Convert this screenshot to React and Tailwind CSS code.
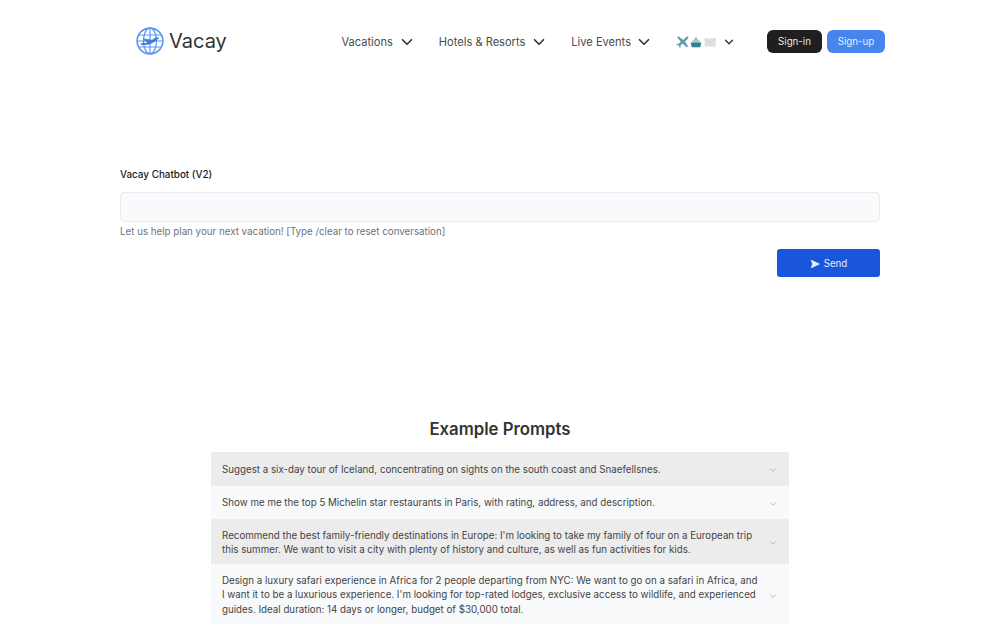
import React from 'react';
import { ChevronDown, SendHorizontal } from 'lucide-react';

const prompts = [
  { text: 'Suggest a six-day tour of Iceland, concentrating on sights on the south coast and Snaefellsnes.', bg: 'bg-[#ececec]' },
  { text: 'Show me me the top 5 Michelin star restaurants in Paris, with rating, address, and description.', bg: 'bg-[#f8f9fb]' },
  { text: "Recommend the best family-friendly destinations in Europe: I'm looking to take my family of four on a European trip this summer. We want to visit a city with plenty of history and culture, as well as fun activities for kids.", bg: 'bg-[#ececec]' },
  { text: "Design a luxury safari experience in Africa for 2 people departing from NYC: We want to go on a safari in Africa, and I want it to be a luxurious experience. I'm looking for top-rated lodges, exclusive access to wildlife, and experienced guides. Ideal duration: 14 days or longer, budget of $30,000 total.", bg: 'bg-[#f8f9fb]' },
];

const Logo = () => (
  <svg width="28" height="28" viewBox="0 0 28 28" fill="none" stroke="#5b96f0" strokeWidth="1.2">
    <circle cx="14" cy="14" r="12.9" strokeWidth="1.6" />
    <ellipse cx="14" cy="14" rx="6.5" ry="12.9" />
    <path d="M14 1v26M2.5 8h23M1.2 14h25.6M2.5 20h23" />
    <path d="M5 17.5c5 .6 10-.4 13-2.8l5-3.7-3.4-.3-3.6 2.5-7-1.2-1.6.8 4.8 2.2-3 1.6-2.6-.8z" fill="#3f78d8" stroke="#3f78d8" strokeWidth="0.6" />
  </svg>
);

const NavItem = ({ label, gap }) => (
  <div className={`flex items-center mt-[2px] ${gap}`}>
    <span className="pt-[1px]">{label}</span>
    <ChevronDown className="w-[18px] h-[18px] text-[#333]" strokeWidth={2.2} />
  </div>
);

const Emojis = () => (
  <svg width="40" height="14" viewBox="0 0 42 14">
    <path d="M1 2l2-.8 4.6 3.6L10.4 2c.8-.8 2-1 2.4-.6s.2 1.6-.6 2.4L9.4 6.6l3.4 5-1.6 1-4.4-4L4.6 11l.4 1.6-1 .6-1.2-2.4L.4 9.6l.6-1 1.6.4 2.4-2.4z" fill="#5f9ea8" />
    <path d="M20 2.5h2v2h-2z" fill="#c8694e" />
    <path d="M17.5 5c1-1.2 6-1.2 7 0v2.5h-7z" fill="#8fd0dc" />
    <path d="M15.5 7.5h11l-1 5h-9z" fill="#2f7f92" />
    <rect x="30" y="3" width="12" height="9" rx="1" fill="#dfe1e4" />
    <path d="M30.5 3.5L36 8l5.5-4.5" fill="none" stroke="#c3c6ca" strokeWidth="0.8" />
  </svg>
);

const App = () => {
  return (
    <div className="h-[625px] overflow-hidden bg-white text-[#374151] font-['Inter','Liberation_Sans',sans-serif]">
      <header className="flex items-center justify-between h-[82px] pl-[136px] pr-[115px]">
        <div className="flex items-center gap-[5px]">
          <Logo />
          <span className="text-[20px] leading-7 text-[#333]">Vacay</span>
        </div>
        <nav className="flex items-center text-[11.1px] text-[#4b4b4b]">
          <NavItem label="Vacations" gap="gap-[5px]" />
          <div className="ml-[23px]"><NavItem label="Hotels & Resorts" gap="gap-[5px]" /></div>
          <div className="ml-[23px]"><NavItem label="Live Events" gap="gap-[4px]" /></div>
          <div className="ml-[23px] mt-[2px] flex items-center gap-[6px]">
            <Emojis />
            <ChevronDown className="w-[14px] h-[14px] text-[#333]" strokeWidth={2.4} />
          </div>
          <button className="ml-[31px] w-[55px] h-[23px] pt-[3px] rounded-md bg-[#1f1f1f] text-[#e8e8e8] text-[9.75px]">Sign-in</button>
          <button className="ml-[5px] w-[58px] h-[23px] pt-[3px] rounded-md bg-[#4784ee] text-[#e6effd] text-[9.75px]">Sign-up</button>
        </nav>
      </header>

      <section className="w-[760px] mx-auto pt-[85px]">
        <label className="block text-[9.9px] leading-[14px] font-medium text-[#222]">Vacay Chatbot (V2)</label>
        <div className="mt-[11px] h-[30px] rounded bg-[#f9fafb] border border-[#e9ebee]"></div>
        <p className="mt-[3px] text-[9.75px] leading-[14px] text-[#6b7280]">Let us help plan your next vacation! [Type /clear to reset conversation]</p>
        <div className="flex justify-end mt-[10px]">
          <button className="w-[103px] h-[28px] pt-[2px] rounded-[3px] bg-[#1a56db] text-[#e8eefc] text-[9.75px] flex items-center justify-center gap-[4px]">
            <SendHorizontal className="w-[10px] h-[10px] fill-current" strokeWidth={1.5} />
            Send
          </button>
        </div>
      </section>

      <section className="w-[578px] mx-auto pt-[140px]">
        <h2 className="text-[16.75px] leading-6 font-semibold text-center text-[#333]">Example Prompts</h2>
        <div className="mt-[11px]">
          {prompts.map((p) => (
            <div key={p.text} className={`flex items-center justify-between min-h-[33.5px] px-[11px] pt-[9.5px] pb-[6.5px] ${p.bg}`}>
              <p className="w-[540px] text-[9.75px] leading-[14.6px] text-[#444]">{p.text}</p>
              <ChevronDown className="w-[10px] h-[10px] text-[#8b919a]" strokeWidth={1.5} />
            </div>
          ))}
        </div>
      </section>
    </div>
  );
};

export default App;
